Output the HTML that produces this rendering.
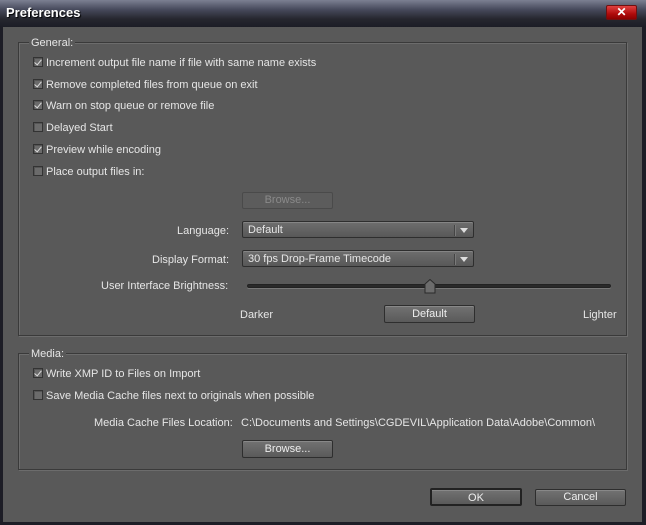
<!DOCTYPE html>
<html><head><meta charset="utf-8"><style>
*{margin:0;padding:0;box-sizing:border-box}
body{width:646px;height:525px;overflow:hidden;background:#1e1e26;font-family:"Liberation Sans",sans-serif;font-size:11px;color:#e6e6e6}
#win{position:absolute;left:0;top:0;width:646px;height:525px;background:#1d1d26}
#title{position:absolute;left:0;top:0;width:646px;height:27px;background:linear-gradient(#7c8092 0%,#474a5c 35%,#26272f 70%,#1c1d26 100%)}
#title span{position:absolute;left:6px;top:5px;font-weight:bold;font-size:13px;color:#fff;text-shadow:1px 1px 1px #000}
#close{position:absolute;left:606px;top:5px;width:31px;height:15px;border-radius:2px;background:linear-gradient(#e04040,#b00c0c 60%,#8c0000);border:1px solid #701010;color:#fff;font-size:12px;font-weight:bold;text-align:center;line-height:13px}
#body{position:absolute;left:3px;top:27px;width:639px;height:495px;background:#595959}
.grp{position:absolute;border:1px solid #3a3a3a;box-shadow:1px 1px 0 #6c6c6c, inset 1px 1px 0 #6c6c6c}
.lg{position:absolute;background:#595959;padding:0 2px}
.t{position:absolute;white-space:nowrap;margin-top:1px}
.cb{position:absolute;width:10px;height:10px;border:1px solid #333;background:#6b6b6b;box-shadow:inset 1px 1px 0 #555}
.cb.c::after{content:"";position:absolute;left:2px;top:0px;width:3px;height:6px;border:solid #ddd;border-width:0 1.5px 1.5px 0;transform:rotate(40deg)}
.btn{position:absolute;border:1px solid #2e2e2e;border-radius:2px;background:linear-gradient(#727272,#5a5a5a);text-align:center;color:#eee;box-shadow:inset 0 1px 0 #888}
.dd{position:absolute;border:1px solid #2e2e2e;border-radius:2px;background:linear-gradient(#6e6e6e,#585858);box-shadow:inset 0 1px 0 #858585}
.dd span{position:absolute;left:5px;top:2px}
.dd i{position:absolute;right:18px;top:3px;width:1px;height:11px;background:#444;box-shadow:1px 0 0 #7a7a7a}
.dd b{position:absolute;right:5px;top:6px;border-left:4px solid transparent;border-right:4px solid transparent;border-top:5px solid #ddd}
</style></head><body><div id="win">
<div id="title"><span>Preferences</span><div id="close">✕</div></div>
<div id="body"></div>

<div class="grp" style="left:18px;top:42px;width:609px;height:294px"></div>
<div class="lg t" style="left:29px;top:36px">General:</div>

<div class="cb c" style="left:33px;top:57px"></div><div class="t" style="left:46px;top:56px">Increment output file name if file with same name exists</div>
<div class="cb c" style="left:33px;top:79px"></div><div class="t" style="left:46px;top:78px">Remove completed files from queue on exit</div>
<div class="cb c" style="left:33px;top:100px"></div><div class="t" style="left:46px;top:99px">Warn on stop queue or remove file</div>
<div class="cb" style="left:33px;top:122px"></div><div class="t" style="left:46px;top:121px">Delayed Start</div>
<div class="cb c" style="left:33px;top:144px"></div><div class="t" style="left:46px;top:143px">Preview while encoding</div>
<div class="cb" style="left:33px;top:166px"></div><div class="t" style="left:46px;top:165px">Place output files in:</div>

<div class="btn" style="left:242px;top:192px;width:91px;height:17px;background:#5c5c5c;border-color:#4a4a4a;box-shadow:none;color:#8a8a8a;line-height:15px">Browse...</div>

<div class="t" style="left:177px;top:224px">Language:</div>
<div class="dd" style="left:242px;top:221px;width:232px;height:17px"><span>Default</span><i></i><b></b></div>
<div class="t" style="left:152px;top:253px">Display Format:</div>
<div class="dd" style="left:242px;top:250px;width:232px;height:17px"><span>30 fps Drop-Frame Timecode</span><i></i><b></b></div>

<div class="t" style="left:101px;top:279px">User Interface Brightness:</div>
<div style="position:absolute;left:247px;top:284px;width:364px;height:4px;border-radius:2px;background:#2a2a2a;border:1px solid #222;box-shadow:0 1px 0 #777"></div>
<svg style="position:absolute;left:424px;top:279px" width="12" height="15"><path d="M1 5 L6 0.5 L11 5 L11 14 L1 14 Z" fill="#6c6c6c" stroke="#2a2a2a"/></svg>

<div class="t" style="left:240px;top:308px">Darker</div>
<div class="btn" style="left:384px;top:305px;width:91px;height:18px;line-height:16px">Default</div>
<div class="t" style="left:583px;top:308px">Lighter</div>

<div class="grp" style="left:18px;top:353px;width:609px;height:117px"></div>
<div class="lg t" style="left:29px;top:347px">Media:</div>
<div class="cb c" style="left:33px;top:368px"></div><div class="t" style="left:46px;top:367px">Write XMP ID to Files on Import</div>
<div class="cb" style="left:33px;top:390px"></div><div class="t" style="left:46px;top:389px">Save Media Cache files next to originals when possible</div>
<div class="t" style="left:94px;top:416px">Media Cache Files Location:</div>
<div class="t" style="left:241px;top:416px">C:\Documents and Settings\CGDEVIL\Application Data\Adobe\Common\</div>
<div class="btn" style="left:242px;top:440px;width:91px;height:18px;line-height:16px">Browse...</div>

<div class="btn" style="left:430px;top:488px;width:92px;height:18px;line-height:16px;border:2px solid #222">OK</div>
<div class="btn" style="left:535px;top:489px;width:91px;height:17px;line-height:15px">Cancel</div>
</div></body></html>
